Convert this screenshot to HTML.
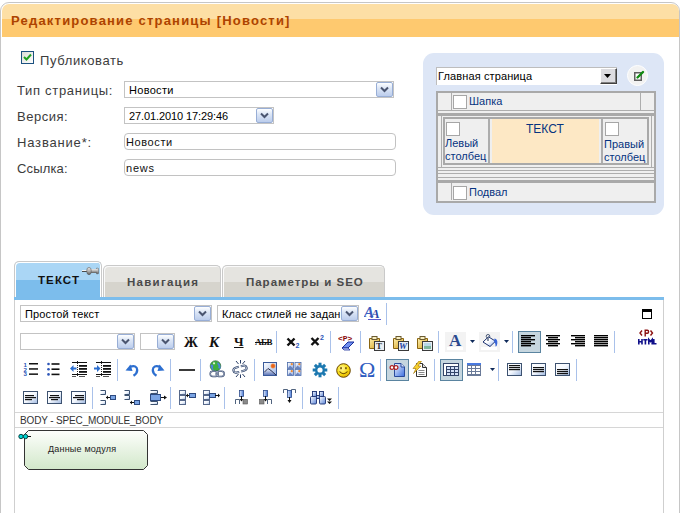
<!DOCTYPE html>
<html><head><meta charset="utf-8">
<style>
*{box-sizing:border-box;margin:0;padding:0}
html,body{width:680px;height:513px;overflow:hidden;background:#fff}
body{position:relative;font-family:"Liberation Sans",sans-serif;color:#000}
.a{position:absolute}
svg{display:block}
.t{position:absolute;white-space:nowrap;line-height:1}
#win{left:0;top:2px;width:680px;height:530px;border:1px solid #c6c6c6;border-radius:9px 9px 0 0;background:#fff}
#hdr{left:2px;top:4px;width:677px;height:33px;border-radius:7px 7px 0 0;background:linear-gradient(#fddfa5 0,#fddfa5 15px,#fec96f 15px,#fec96f 33px)}
.lbl{font-size:13px;color:#3c3c3c;letter-spacing:.7px}
.sel{position:absolute;border:1px solid #c3c3c3;background:#fff;height:17px}
.sel .v{position:absolute;left:4px;top:3px;font-size:11px;line-height:1;white-space:nowrap}
.xb{position:absolute;right:0;top:0;width:17px;height:15px;border:1px solid #98aed6;border-radius:2px;background:linear-gradient(#fdfeff,#dce6f6 40%,#bccdec)}
.xb svg{position:absolute;left:3px;top:3px}
.inp{position:absolute;border:1px solid #c2c2c2;border-radius:4px;background:#fff;height:17px}
.inp .v{position:absolute;left:1px;top:3px;font-size:11px;line-height:1;white-space:nowrap;letter-spacing:.6px;color:#111}
#panel{left:423px;top:53px;width:241px;height:162px;border-radius:11px;background:#dde6f6}
.bl{color:#06337f;font-size:11px}
.cb{position:absolute;width:14px;height:14px;border:1px solid #a6a6a6;background:#fff}
.sep{position:absolute;width:1px;background:#a9c1ea}
.tab{position:absolute;border:1px solid #c9c9c9;border-bottom:none;border-radius:5px 5px 0 0}
</style></head><body>
<div id="win" class="a"></div>
<div id="hdr" class="a"></div>
<div class="t" style="left:11px;top:14px;font-size:13px;font-weight:bold;color:#ad4300;letter-spacing:1.2px">Редактирование страницы [Новости]</div>

<!-- publish checkbox -->
<div class="a" style="left:21px;top:51px;width:13px;height:13px;border:1px solid #1c5180;background:linear-gradient(135deg,#dcdcd6,#fff)"></div>
<svg class="a" style="left:23px;top:53px" width="9" height="9" viewBox="0 0 9 9"><path d="M1 4 L3.5 6.5 L8 1.5" stroke="#21a121" stroke-width="2" fill="none"/></svg>
<div class="t lbl" style="left:40px;top:54px;letter-spacing:.62px">Публиковать</div>

<div class="t lbl" style="left:17px;top:84px">Тип страницы:</div>
<div class="t lbl" style="left:17px;top:110px;letter-spacing:.5px">Версия:</div>
<div class="t lbl" style="left:17px;top:136px;letter-spacing:.82px">Название*:</div>
<div class="t lbl" style="left:17px;top:162px;letter-spacing:.15px">Ссылка:</div>

<div class="sel" style="left:124px;top:81px;width:270px"><div class="v" style="letter-spacing:.3px">Новости</div><div class="xb"><svg width="9" height="7" viewBox="0 0 9 7"><path d="M1 1.5 L4.5 5 L8 1.5" stroke="#4a5570" stroke-width="2" fill="none"/></svg></div></div>
<div class="sel" style="left:124px;top:107px;width:150px"><div class="v" style="letter-spacing:-.1px">27.01.2010 17:29:46</div><div class="xb"><svg width="9" height="7" viewBox="0 0 9 7"><path d="M1 1.5 L4.5 5 L8 1.5" stroke="#4a5570" stroke-width="2" fill="none"/></svg></div></div>
<div class="inp" style="left:124px;top:133px;width:272px"><div class="v">Новости</div></div>
<div class="inp" style="left:124px;top:159px;width:272px"><div class="v" style="letter-spacing:.8px">news</div></div>

<!-- right panel -->
<div id="panel" class="a"></div>
<div class="a" style="left:436px;top:67px;width:181px;height:18px;border-top:1px solid #bdbdbd;border-left:1px solid #bdbdbd;background:#fff"></div>
<div class="t" style="left:438px;top:71px;font-size:11px;letter-spacing:.12px">Главная страница</div>
<div class="a" style="left:600px;top:68px;width:17px;height:16px;background:#dcdce0;border:1px solid;border-color:#fff #404040 #404040 #fff;box-shadow:inset -1px -1px 0 #808080"></div>
<svg class="a" style="left:604px;top:74px" width="7" height="4"><path d="M0 0H7L3.5 4Z" fill="#000"/></svg>
<div class="a" style="left:627px;top:65px;width:21px;height:21px;border-radius:50%;background:#f2f2f2;border:1px solid #fff"></div>
<svg class="a" style="left:633px;top:70px" width="12" height="12" viewBox="0 0 12 12"><rect x="1.75" y="2.75" width="6.5" height="7.5" fill="#fff" stroke="#606060" stroke-width="1.5"/><path d="M4.5 7.5 L10 2" stroke="#108a10" stroke-width="2.4" stroke-linecap="round"/></svg>

<div id="lt" class="a" style="left:436px;top:91px;width:220px;height:112px;background:#efefef;border:2px solid #a9a9a9"></div>
<div class="a" style="left:451px;top:93px;width:1px;height:17px;background:#adadad"></div>
<div class="a" style="left:640px;top:93px;width:1px;height:17px;background:#adadad"></div>
<div class="a" style="left:438px;top:110px;width:216px;height:1px;background:#adadad"></div>
<div class="a" style="left:438px;top:113px;width:216px;height:3px;background:#a9a9a9"></div>
<div class="cb" style="left:453px;top:95px"></div>
<div class="t bl" style="left:469px;top:96px">Шапка</div>
<div class="a" style="left:441px;top:116px;width:1px;height:52px;background:#adadad"></div>
<div class="a" style="left:651px;top:116px;width:1px;height:52px;background:#adadad"></div>
<div class="a" style="left:443px;top:117px;width:206px;height:48px;border:2px solid #a9a9a9"></div>
<div class="a" style="left:488px;top:119px;width:2px;height:44px;background:#adadad"></div>
<div class="a" style="left:492px;top:119px;width:107px;height:44px;background:#fde8c5"></div>
<div class="a" style="left:601px;top:119px;width:2px;height:44px;background:#adadad"></div>
<div class="cb" style="left:446px;top:122px"></div>
<div class="cb" style="left:605px;top:122px"></div>
<div class="t bl" style="left:526px;top:123px;font-size:12px">ТЕКСТ</div>
<div class="t bl" style="left:445px;top:137px;line-height:13px">Левый<br>столбец</div>
<div class="t bl" style="left:604px;top:138px;line-height:13px">Правый<br>столбец</div>
<div class="a" style="left:438px;top:167px;width:216px;height:1px;background:#adadad"></div>
<div class="a" style="left:438px;top:170px;width:216px;height:1px;background:#adadad"></div>
<div class="a" style="left:438px;top:173px;width:216px;height:1px;background:#adadad"></div>
<div class="a" style="left:438px;top:177px;width:216px;height:1px;background:#adadad"></div>
<div class="a" style="left:438px;top:180px;width:216px;height:3px;background:#a9a9a9"></div>
<div class="a" style="left:451px;top:183px;width:1px;height:17px;background:#adadad"></div>
<div class="cb" style="left:453px;top:186px"></div>
<div class="t bl" style="left:469px;top:187px">Подвал</div>

<!-- tabs -->
<div class="tab" style="left:14px;top:261px;width:88px;height:36px;background:linear-gradient(#aad6f5 0,#aad6f5 18px,#7cbdec 18px);box-shadow:inset 1px 1px 0 #fff,inset -1px 0 0 #fff"></div>
<div class="t" style="left:38px;top:275px;font-size:11.5px;font-weight:bold;letter-spacing:1.1px;color:#111">ТЕКСТ</div>
<svg class="a" style="left:82px;top:267px" width="17" height="8" viewBox="0 0 17 8"><defs><linearGradient id="pg" x1="0" y1="0" x2="0" y2="1"><stop offset="0" stop-color="#e8e8e8"/><stop offset=".5" stop-color="#b4b4b4"/><stop offset="1" stop-color="#5a5a5a"/></linearGradient></defs><rect x="0" y="3" width="5" height="1" fill="#f4f4f4"/><rect x="0" y="4" width="5" height="1" fill="#4a4a4a"/><path d="M14.5 1.2H15.8Q16.6 1.2 16.6 2V6Q16.6 6.8 15.8 6.8H14.5Z" fill="url(#pg)" stroke="#555" stroke-width=".5"/><rect x="8" y="2" width="7" height="4" fill="url(#pg)"/><ellipse cx="7" cy="4" rx="2.3" ry="3.7" fill="url(#pg)" stroke="#4a4a4a" stroke-width=".5"/></svg>
<div class="tab" style="left:103px;top:265px;width:118px;height:32px;background:linear-gradient(#e5e4e0 0,#e5e4e0 16px,#d6d4cd 16px);box-shadow:inset 1px 1px 0 #fafafa"></div>
<div class="t" style="left:127px;top:277px;font-size:11.5px;font-weight:bold;letter-spacing:1.26px;color:#4a4a4a">Навигация</div>
<div class="tab" style="left:222px;top:265px;width:163px;height:32px;background:linear-gradient(#e5e4e0 0,#e5e4e0 16px,#d6d4cd 16px);box-shadow:inset 1px 1px 0 #fafafa"></div>
<div class="t" style="left:246px;top:277px;font-size:11.5px;font-weight:bold;letter-spacing:.98px;color:#4a4a4a">Параметры и SEO</div>
<div class="a" style="left:14px;top:297px;width:650px;height:3px;background:#7cbdec"></div>
<div class="a" style="left:14px;top:300px;width:650px;height:220px;border:1px solid #cfcfcf;border-top:none"></div>
<div class="a" style="left:15px;top:412px;width:648px;height:1px;background:#d6d6d6"></div>
<div class="a" style="left:15px;top:427px;width:648px;height:1px;background:#d6d6d6"></div>
<div class="t" style="left:20px;top:416px;font-size:10px;letter-spacing:-.15px;color:#333">BODY - SPEC_MODULE_BODY</div>
<svg class="a" style="left:23px;top:429px" width="127" height="43" viewBox="0 0 127 43"><defs><linearGradient id="mg" x1="0" y1="0" x2="0" y2="1"><stop offset="0" stop-color="#fdfefc"/><stop offset="1" stop-color="#d2e8ca"/></linearGradient></defs><path d="M5.5 1.5H120.5L124.5 5.5V36.5L120.5 40.5H5.5L1.5 36.5V5.5Z" fill="url(#mg)" stroke="#333" stroke-width="1"/></svg>
<div class="t" style="left:48px;top:445px;font-size:9px;letter-spacing:.2px;color:#222">Данные модуля</div>
<div class="sel" style="left:20px;top:305px;width:192px"><div class="v" style="letter-spacing:0.15px">Простой текст</div><div class="xb"><svg width="9" height="7" viewBox="0 0 9 7"><path d="M1 1.5 L4.5 5 L8 1.5" stroke="#4a5570" stroke-width="2" fill="none"/></svg></div></div>
<div class="sel" style="left:217px;top:305px;width:142px"><div class="v" style="letter-spacing:0.1px">Класс стилей не задан</div><div class="xb"><svg width="9" height="7" viewBox="0 0 9 7"><path d="M1 1.5 L4.5 5 L8 1.5" stroke="#4a5570" stroke-width="2" fill="none"/></svg></div></div>
<svg class="a" style="left:364px;top:304px" width="19" height="17" viewBox="0 0 19 17"><text x="0" y="13" font-family="Liberation Serif" font-style="italic" font-weight="bold" font-size="15" fill="#3b5cc0">A</text><text x="7" y="14" font-family="Liberation Serif" font-style="italic" font-weight="bold" font-size="13" fill="#2a48a8">A</text><rect x="4" y="15" width="13" height="1" fill="#5a5ad0"/></svg>
<div class="sep" style="left:386px;top:303px;height:22px"></div>
<svg class="a" style="left:642px;top:309px" width="10" height="10" viewBox="0 0 10 10"><rect x="0.5" y="0.5" width="9" height="9" fill="none" stroke="#000"/><rect x="0" y="0" width="10" height="3" fill="#000"/></svg>
<div class="sel" style="left:20px;top:333px;width:115px"><div class="xb"><svg width="9" height="7" viewBox="0 0 9 7"><path d="M1 1.5 L4.5 5 L8 1.5" stroke="#4a5570" stroke-width="2" fill="none"/></svg></div></div>
<div class="sel" style="left:140px;top:333px;width:35px"><div class="xb"><svg width="9" height="7" viewBox="0 0 9 7"><path d="M1 1.5 L4.5 5 L8 1.5" stroke="#4a5570" stroke-width="2" fill="none"/></svg></div></div>
<div class="t" style="left:184px;top:336px;font-family:'Liberation Serif',serif;font-size:14px;font-style:normal;font-weight:bold;color:#111;">Ж</div>
<div class="t" style="left:209px;top:335px;font-family:'Liberation Serif',serif;font-size:15px;font-style:italic;font-weight:bold;color:#111;">К</div>
<div class="t" style="left:234px;top:335px;font-family:'Liberation Serif',serif;font-size:13px;font-style:normal;font-weight:bold;color:#111;text-decoration:underline;text-underline-offset:1px">Ч</div>
<div class="t" style="left:255px;top:338px;font-family:'Liberation Serif',serif;font-size:9px;font-weight:bold;letter-spacing:-.5px;color:#111">АБВ</div>
<div class="a" style="left:255px;top:342px;width:16px;height:1px;background:#111"></div>
<div class="sep" style="left:276px;top:331px;height:22px"></div>
<svg class="a" style="left:286px;top:336px" width="16" height="13" viewBox="0 0 16 13"><path d="M1.5 2.5L8.5 9.5M8.5 2.5L1.5 9.5" stroke="#111" stroke-width="2.4"/><text x="9.5" y="11.5" font-family="Liberation Sans" font-weight="bold" font-size="7" fill="#2d56b8">2</text></svg>
<svg class="a" style="left:310px;top:333px" width="16" height="14" viewBox="0 0 16 14"><path d="M1.5 5L8.5 12M8.5 5L1.5 12" stroke="#111" stroke-width="2.4"/><text x="10" y="7" font-family="Liberation Sans" font-weight="bold" font-size="7" fill="#2d56b8">2</text></svg>
<div class="sep" style="left:330px;top:331px;height:22px"></div>
<svg class="a" style="left:338px;top:334px" width="18" height="17" viewBox="0 0 18 17"><text x="0" y="7" font-family="Liberation Mono" font-weight="bold" font-size="8" fill="#8b0a0a">&lt;P&gt;</text><path d="M4 14 L10 8 L16 8 L10 14 Z" fill="#6f8ff0" stroke="#1a2f9a" stroke-width="1"/><path d="M4 14 L6 16 L12 16 L10 14Z" fill="#c8d4ff" stroke="#1a2f9a" stroke-width=".8"/></svg>
<div class="sep" style="left:360px;top:331px;height:22px"></div>
<svg class="a" style="left:368px;top:335px" width="17" height="16" viewBox="0 0 17 16"><defs><linearGradient id="cl" x1="0" y1="0" x2="1" y2="1"><stop offset="0" stop-color="#fff2b0"/><stop offset="1" stop-color="#d49e1c"/></linearGradient></defs><path d="M1.5 3.5H11.5V13.5H1.5Z" fill="url(#cl)" stroke="#8a6510"/><rect x="4" y="1.5" width="5" height="3" fill="#f8eec0" stroke="#6a5a30" stroke-width="1"/><rect x="6.5" y="6.5" width="10" height="9" fill="#e9eef3" stroke="#3a3a3a"/><text x="8" y="14" font-family="Liberation Serif" font-weight="bold" font-size="9" fill="#333">T</text></svg>
<svg class="a" style="left:392px;top:335px" width="17" height="16" viewBox="0 0 17 16"><defs><linearGradient id="cl" x1="0" y1="0" x2="1" y2="1"><stop offset="0" stop-color="#fff2b0"/><stop offset="1" stop-color="#d49e1c"/></linearGradient></defs><path d="M1.5 3.5H11.5V13.5H1.5Z" fill="url(#cl)" stroke="#8a6510"/><rect x="4" y="1.5" width="5" height="3" fill="#f8eec0" stroke="#6a5a30" stroke-width="1"/><rect x="6.5" y="6.5" width="10" height="9" fill="#e9eef3" stroke="#3a3a3a"/><text x="7" y="14" font-family="Liberation Serif" font-style="italic" font-weight="bold" font-size="9" fill="#2040a0">W</text></svg>
<svg class="a" style="left:416px;top:335px" width="17" height="16" viewBox="0 0 17 16"><defs><linearGradient id="cl" x1="0" y1="0" x2="1" y2="1"><stop offset="0" stop-color="#fff2b0"/><stop offset="1" stop-color="#d49e1c"/></linearGradient></defs><path d="M1.5 3.5H11.5V13.5H1.5Z" fill="url(#cl)" stroke="#8a6510"/><rect x="4" y="1.5" width="5" height="3" fill="#f8eec0" stroke="#6a5a30" stroke-width="1"/><rect x="6.5" y="6.5" width="10" height="9" fill="#e9eef3" stroke="#3a3a3a"/><rect x="8" y="8" width="7" height="6" fill="#7fb8a0"/><rect x="8" y="8" width="7" height="3" fill="#b8d8e8"/></svg>
<div class="sep" style="left:438px;top:331px;height:22px"></div>
<div class="a" style="left:445px;top:332px;width:21px;height:20px;background:#f3f3f3;"></div>
<div class="a" style="left:447px;top:347px;width:16px;height:3px;background:#fff"></div>
<div class="t" style="left:449px;top:332px;font-family:'Liberation Serif',serif;font-size:17px;font-style:normal;font-weight:bold;color:#2b4a90;">A</div>
<svg class="a" style="left:470px;top:340px" width="5" height="3" viewBox="0 0 5 3"><path d="M0 0H5L2.5 3Z" fill="#0f2a5a"/></svg>
<div class="a" style="left:479px;top:332px;width:21px;height:20px;background:#f3f3f3;"></div>
<div class="a" style="left:481px;top:347px;width:16px;height:3px;background:#fff"></div>
<svg class="a" style="left:482px;top:334px" width="16" height="14" viewBox="0 0 16 14"><defs><linearGradient id="bk" x1="0" y1="0" x2="1" y2="1"><stop offset=".45" stop-color="#fff"/><stop offset="1" stop-color="#8fb0ee"/></linearGradient></defs><circle cx="6" cy="2.3" r="1.8" fill="none" stroke="#4a5a78" stroke-width="1"/><path d="M1 8 L6.5 2.8 L13.5 7.2 L8 12.5 Z" fill="url(#bk)" stroke="#1a3070" stroke-width="1"/><path d="M6 3V7" stroke="#4a5a78" stroke-width="1.3"/><path d="M12.5 4.5 Q15.8 5 15.3 9.5 Q15 12.5 13.5 12.5 Q13.8 9.5 12 7.5Z" fill="#3a66d8"/></svg>
<svg class="a" style="left:504px;top:340px" width="5" height="3" viewBox="0 0 5 3"><path d="M0 0H5L2.5 3Z" fill="#0f2a5a"/></svg>
<div class="sep" style="left:512px;top:331px;height:22px"></div>
<div class="a" style="left:518px;top:331px;width:23px;height:22px;background:#c6d6df;border:1px solid #5a84a0;"></div>
<svg class="a" style="left:521px;top:335px" width="14" height="12" viewBox="0 0 14 12"><rect x="0" y="0" width="14" height="1.4" fill="#000"/><rect x="0" y="2" width="10" height="1.4" fill="#000"/><rect x="0" y="4" width="14" height="1.4" fill="#000"/><rect x="0" y="6" width="10" height="1.4" fill="#000"/><rect x="0" y="8" width="14" height="1.4" fill="#000"/><rect x="0" y="10" width="10" height="1.4" fill="#000"/></svg>
<svg class="a" style="left:546px;top:335px" width="14" height="12" viewBox="0 0 14 12"><rect x="0" y="0" width="14" height="1.4" fill="#000"/><rect x="2" y="2" width="10" height="1.4" fill="#000"/><rect x="0" y="4" width="14" height="1.4" fill="#000"/><rect x="2" y="6" width="10" height="1.4" fill="#000"/><rect x="0" y="8" width="14" height="1.4" fill="#000"/><rect x="2" y="10" width="10" height="1.4" fill="#000"/></svg>
<svg class="a" style="left:571px;top:335px" width="14" height="12" viewBox="0 0 14 12"><rect x="0" y="0" width="14" height="1.4" fill="#000"/><rect x="4" y="2" width="10" height="1.4" fill="#000"/><rect x="0" y="4" width="14" height="1.4" fill="#000"/><rect x="4" y="6" width="10" height="1.4" fill="#000"/><rect x="0" y="8" width="14" height="1.4" fill="#000"/><rect x="4" y="10" width="10" height="1.4" fill="#000"/></svg>
<svg class="a" style="left:594px;top:335px" width="14" height="12" viewBox="0 0 14 12"><rect x="0" y="0" width="14" height="1.4" fill="#000"/><rect x="0" y="2" width="14" height="1.4" fill="#000"/><rect x="0" y="4" width="14" height="1.4" fill="#000"/><rect x="0" y="6" width="14" height="1.4" fill="#000"/><rect x="0" y="8" width="14" height="1.4" fill="#000"/><rect x="0" y="10" width="14" height="1.4" fill="#000"/></svg>
<div class="sep" style="left:614px;top:331px;height:22px"></div>
<svg class="a" style="left:636px;top:328px" width="21" height="18" viewBox="0 0 21 18"><g fill="none" stroke="#8b1010" stroke-width="1.4"><path d="M6 2.5 L4 5 L6 7.5"/><path d="M9.2 8.5 V2.2 H11.3 Q12.6 2.2 12.6 3.8 Q12.6 5.3 11.3 5.3 H9.2"/><path d="M14.5 2.5 L16.5 5 L14.5 7.5"/></g><g fill="none" stroke="#10108a" stroke-width="1.6"><path d="M2.8 11 V16.5 M6 11 V16.5 M2.8 13.7 H6"/><path d="M7.3 11.8 H11.5 M9.4 11 V16.5"/><path d="M12.8 16.5 V11.5 L14.5 13.5 L16.2 11.5 V16.5"/><path d="M17.8 11 V15.7 H20.5"/></g></svg>
<svg class="a" style="left:23px;top:362px" width="15" height="14" viewBox="0 0 15 14"><text x="0.5" y="5.0" font-family="Liberation Sans" font-weight="bold" font-size="6.2" fill="#2d56b8">1</text><rect x="6" y="1.0" width="9" height="1.5" fill="#111"/><text x="0.5" y="9.6" font-family="Liberation Sans" font-weight="bold" font-size="6.2" fill="#2d56b8">2</text><rect x="6" y="6.2" width="9" height="1.5" fill="#111"/><text x="0.5" y="14.2" font-family="Liberation Sans" font-weight="bold" font-size="6.2" fill="#2d56b8">3</text><rect x="6" y="11.4" width="9" height="1.5" fill="#111"/></svg>
<svg class="a" style="left:47px;top:362px" width="14" height="14" viewBox="0 0 14 14"><circle cx="1.5" cy="2.0" r="1.3" fill="#2d56b8"/><rect x="4.5" y="1.2" width="8" height="1.6" fill="#111"/><circle cx="1.5" cy="7.2" r="1.3" fill="#2d56b8"/><rect x="4.5" y="6.4" width="8" height="1.6" fill="#111"/><circle cx="1.5" cy="12.4" r="1.3" fill="#2d56b8"/><rect x="4.5" y="11.6" width="8" height="1.6" fill="#111"/></svg>
<svg class="a" style="left:70px;top:361px" width="17" height="16" viewBox="0 0 17 16"><rect x="2" y="1" width="15" height="1" fill="#111"/><rect x="2" y="13" width="15" height="1" fill="#111"/><rect x="9" y="4" width="8" height="1.8" fill="#111"/><rect x="9" y="7" width="8" height="1.8" fill="#111"/><rect x="9" y="10" width="8" height="1.8" fill="#111"/><path d="M7.5 0V16" stroke="#222" stroke-width="1" stroke-dasharray="1 1"/><rect x="2" y="15" width="4" height="1" fill="#555"/><rect x="9" y="15" width="6" height="1" fill="#555"/><path d="M0 7.5 L3.5 4 V6.5 H6.5 V8.5 H3.5 V11Z" fill="#2d6fd0"/></svg>
<svg class="a" style="left:94px;top:361px" width="17" height="16" viewBox="0 0 17 16"><rect x="2" y="1" width="15" height="1" fill="#111"/><rect x="2" y="13" width="15" height="1" fill="#111"/><rect x="9" y="4" width="8" height="1.8" fill="#111"/><rect x="9" y="7" width="8" height="1.8" fill="#111"/><rect x="9" y="10" width="8" height="1.8" fill="#111"/><path d="M7.5 0V16" stroke="#222" stroke-width="1" stroke-dasharray="1 1"/><rect x="2" y="15" width="4" height="1" fill="#555"/><rect x="9" y="15" width="6" height="1" fill="#555"/><path d="M6.5 7.5 L3 4 V6.5 H0 V8.5 H3 V11Z" fill="#2d6fd0"/></svg>
<div class="sep" style="left:117px;top:359px;height:22px"></div>
<svg class="a" style="left:125px;top:363px" width="14" height="14" viewBox="0 0 14 14"><path d="M4.5 4 Q12 1.5 12.2 7 Q12.2 10.5 8.5 12.8" stroke="#2d6fd0" stroke-width="2.3" fill="none"/><path d="M0.5 7.5 L5.5 1.5 L7.5 8Z" fill="#2d6fd0"/></svg>
<svg class="a" style="left:151px;top:363px" width="14" height="14" viewBox="0 0 14 14"><path d="M9.5 4 Q2 1.5 1.8 7 Q1.8 10.5 5.5 12.8" stroke="#2d6fd0" stroke-width="2.3" fill="none"/><path d="M13.5 7.5 L8.5 1.5 L6.5 8Z" fill="#2d6fd0"/></svg>
<div class="sep" style="left:170px;top:359px;height:22px"></div>
<div class="a" style="left:179px;top:369px;width:16px;height:2px;background:#3a3a3a"></div>
<div class="sep" style="left:200px;top:359px;height:22px"></div>
<svg class="a" style="left:209px;top:360px" width="17" height="18" viewBox="0 0 17 18"><circle cx="6.5" cy="6" r="5.3" fill="#3fae3f" stroke="#2a5a3a" stroke-width=".6"/><path d="M1.6 4.5 Q1.8 9 5 11.2 Q3.2 8 4.2 5Z" fill="#4a84e0"/><path d="M8.8 2.2 Q12.2 4.5 11.4 9 L9.2 8 Q10.2 5.8 8.2 3.8Z" fill="#4a84e0"/><circle cx="5" cy="3.3" r="1.1" fill="#e0f4d8"/><g fill="none"><rect x="1.2" y="11.2" width="8" height="5.2" rx="2.6" stroke="#2b3f66" stroke-width="1.5"/><rect x="7.2" y="11.2" width="8" height="5.2" rx="2.6" stroke="#2b3f66" stroke-width="1.5"/><rect x="1.2" y="11.2" width="8" height="5.2" rx="2.6" stroke="#e8eef8" stroke-width=".5"/><rect x="7.2" y="11.2" width="8" height="5.2" rx="2.6" stroke="#e8eef8" stroke-width=".5"/></g></svg>
<svg class="a" style="left:232px;top:360px" width="17" height="18" viewBox="0 0 17 18"><path d="M4 1L6.5 4M8.5 0V3.5M13 1L10.5 4M4 17L6.5 14M8.5 18V14.5M13 17L10.5 14" stroke="#2b3f66" stroke-width="1"/><g fill="none" transform="rotate(-15 8.5 9)"><path d="M7.5 6.5H4Q1.3 6.5 1.3 9Q1.3 11.5 4 11.5H6.5" stroke="#2b3f66" stroke-width="2.1"/><path d="M9.5 6.5H12Q14.7 6.5 14.7 9Q14.7 11.5 12 11.5H8.5" stroke="#2b3f66" stroke-width="2.1"/><path d="M7.5 6.5H4Q1.3 6.5 1.3 9Q1.3 11.5 4 11.5H6.5M9.5 6.5H12Q14.7 6.5 14.7 9Q14.7 11.5 12 11.5H8.5" stroke="#e8eef8" stroke-width=".7"/></g></svg>
<div class="sep" style="left:254px;top:359px;height:22px"></div>
<svg width="0" height="0" style="position:absolute"><defs><linearGradient id="ig" x1="0" y1="0" x2="1" y2="1"><stop offset="0" stop-color="#ffffff"/><stop offset="1" stop-color="#9cb4e4"/></linearGradient><linearGradient id="im" x1="0" y1="0" x2="0" y2="1"><stop offset="0" stop-color="#f4f6fc"/><stop offset="1" stop-color="#6078b8"/></linearGradient></defs></svg>
<svg class="a" style="left:263px;top:362px" width="14" height="14" viewBox="0 0 14 14"><rect x=".5" y=".5" width="13" height="13" fill="url(#ig)" stroke="#3a5a9a"/><path d="M1 11 L5 6.5 L8.5 9.5 L13 13 H1Z" fill="url(#im)"/><path d="M1 10.5 L5 6.5 L8 8.5 L13 13" fill="none" stroke="#2a3050" stroke-width="1"/><circle cx="10" cy="4" r="2.2" fill="#e8641a" stroke="#f0a060" stroke-width=".6"/></svg>
<svg class="a" style="left:287px;top:362px" width="15" height="14" viewBox="0 0 15 14"><rect x="0.5" y="0.5" width="6" height="6" fill="url(#ig)" stroke="#4a6aa8" stroke-width=".8"/><path d="M1 6 L3 3.5 L6.5 6.5Z" fill="#6a84c0"/><circle cx="4.8" cy="2.2" r="1.1" fill="#f08a30"/><rect x="8.0" y="0.5" width="6" height="6" fill="url(#ig)" stroke="#4a6aa8" stroke-width=".8"/><path d="M8.5 6 L10.5 3.5 L14.0 6.5Z" fill="#6a84c0"/><circle cx="12.3" cy="2.2" r="1.1" fill="#f08a30"/><rect x="0.5" y="7.5" width="6" height="6" fill="url(#ig)" stroke="#4a6aa8" stroke-width=".8"/><path d="M1 13 L3 10.5 L6.5 13.5Z" fill="#6a84c0"/><circle cx="4.8" cy="9.2" r="1.1" fill="#f08a30"/><rect x="8.0" y="7.5" width="6" height="6" fill="url(#ig)" stroke="#4a6aa8" stroke-width=".8"/><path d="M8.5 13 L10.5 10.5 L14.0 13.5Z" fill="#6a84c0"/><circle cx="12.3" cy="9.2" r="1.1" fill="#f08a30"/></svg>
<svg class="a" style="left:312px;top:362px" width="16" height="16" viewBox="0 0 16 16"><g transform="translate(8 8)" fill="#1c78b0"><circle r="4.9"/><rect x="-1.5" y="-7.3" width="3" height="3.6" transform="rotate(0)"/><rect x="-1.5" y="-7.3" width="3" height="3.6" transform="rotate(45)"/><rect x="-1.5" y="-7.3" width="3" height="3.6" transform="rotate(90)"/><rect x="-1.5" y="-7.3" width="3" height="3.6" transform="rotate(135)"/><rect x="-1.5" y="-7.3" width="3" height="3.6" transform="rotate(180)"/><rect x="-1.5" y="-7.3" width="3" height="3.6" transform="rotate(225)"/><rect x="-1.5" y="-7.3" width="3" height="3.6" transform="rotate(270)"/><rect x="-1.5" y="-7.3" width="3" height="3.6" transform="rotate(315)"/><circle r="2.6" fill="#fff"/></g></svg>
<svg class="a" style="left:336px;top:363px" width="15" height="15" viewBox="0 0 15 15"><defs><radialGradient id="sm" cx=".4" cy=".35" r=".7"><stop offset="0" stop-color="#fff6a0"/><stop offset=".6" stop-color="#f8dc10"/><stop offset="1" stop-color="#e0a800"/></radialGradient></defs><circle cx="7.5" cy="7.5" r="6.8" fill="url(#sm)" stroke="#6a4800" stroke-width="1"/><rect x="4.3" y="4.2" width="1.5" height="2" fill="#6a4800"/><rect x="9.2" y="4.2" width="1.5" height="2" fill="#6a4800"/><path d="M3.5 8.5 Q7.5 13 11.5 8.5" stroke="#6a4800" fill="none" stroke-width="1.1"/></svg>
<div class="t" style="left:359px;top:359px;font-family:'Liberation Serif',serif;font-size:22px;color:#2f5cc0">Ω</div>
<div class="sep" style="left:380px;top:359px;height:22px"></div>
<div class="a" style="left:386px;top:359px;width:23px;height:22px;background:#c6d6df;border:1px solid #5a84a0;"></div>
<svg class="a" style="left:389px;top:362px" width="17" height="15" viewBox="0 0 17 15"><defs><linearGradient id="md" x1="0" y1="0" x2="1" y2="1"><stop offset="0" stop-color="#f4f8ff"/><stop offset="1" stop-color="#3a6ee0"/></linearGradient></defs><path d="M5.5 1.5 H12 L15.5 5 V14.5 H5.5Z" fill="url(#md)" stroke="#2a4a9a"/><path d="M12 1.5 V5 H15.5" fill="#dde8ff" stroke="#2a4a9a"/><circle cx="3" cy="5.5" r="1.9" fill="#fff" stroke="#b02020" stroke-width="1.2"/><circle cx="7" cy="5.5" r="1.9" fill="#fff" stroke="#b02020" stroke-width="1.2"/></svg>
<svg class="a" style="left:412px;top:361px" width="16" height="16" viewBox="0 0 16 16"><path d="M4.5 2.5 H10.5 L14.5 6.5 V15.5 H4.5Z" fill="#fff" stroke="#333"/><path d="M10.5 2.5V6.5H14.5" fill="#ddd" stroke="#333"/><path d="M6.5 9.5H12.5M6.5 11.5H12.5M6.5 13.5H12.5" stroke="#8a8a8a"/><path d="M7 0 L1 7.5 H4 L1.5 12.5 L9 5 H6 L9.5 0Z" fill="#f6d030" stroke="#a07000" stroke-width=".6"/></svg>
<div class="sep" style="left:434px;top:359px;height:22px"></div>
<div class="a" style="left:440px;top:359px;width:23px;height:22px;background:#c6d6df;border:1px solid #5a84a0;"></div>
<svg class="a" style="left:443px;top:363px" width="16" height="13" viewBox="0 0 16 13"><rect width="16" height="13" fill="#34456a"/><rect x="1" y="1" width="14" height="2" fill="#fff"/><rect x="1" y="1" width="2" height="11" fill="#fff"/><rect x="4" y="4" width="3" height="2" fill="#d4e0f6"/><rect x="8" y="4" width="3" height="2" fill="#d4e0f6"/><rect x="12" y="4" width="3" height="2" fill="#d4e0f6"/><rect x="4" y="7" width="3" height="2" fill="#d4e0f6"/><rect x="8" y="7" width="3" height="2" fill="#d4e0f6"/><rect x="12" y="7" width="3" height="2" fill="#d4e0f6"/><rect x="4" y="10" width="3" height="2" fill="#d4e0f6"/><rect x="8" y="10" width="3" height="2" fill="#d4e0f6"/><rect x="12" y="10" width="3" height="2" fill="#d4e0f6"/></svg>
<svg class="a" style="left:467px;top:363px" width="14" height="13" viewBox="0 0 14 13"><rect width="14" height="13" fill="#6a7a98"/><rect x="0" y="0" width="14" height="2" fill="#4a7ae0"/><rect x="1" y="3" width="3" height="2" fill="#fff"/><rect x="5" y="3" width="3" height="2" fill="#fff"/><rect x="9" y="3" width="4" height="2" fill="#fff"/><rect x="1" y="6" width="3" height="2" fill="#fff"/><rect x="5" y="6" width="3" height="2" fill="#fff"/><rect x="9" y="6" width="4" height="2" fill="#fff"/><rect x="1" y="9" width="3" height="2" fill="#fff"/><rect x="5" y="9" width="3" height="2" fill="#fff"/><rect x="9" y="9" width="4" height="2" fill="#fff"/></svg>
<svg class="a" style="left:490px;top:368px" width="5" height="3" viewBox="0 0 5 3"><path d="M0 0H5L2.5 3Z" fill="#0f2a5a"/></svg>
<div class="sep" style="left:498px;top:359px;height:22px"></div>
<svg width="0" height="0" style="position:absolute"><defs><linearGradient id="gb" x1="0" y1="0" x2="1" y2="1"><stop offset="0" stop-color="#ffffff"/><stop offset=".5" stop-color="#f4f8fe"/><stop offset="1" stop-color="#9fb8e0"/></linearGradient></defs></svg>
<svg class="a" style="left:507px;top:363px" width="15" height="13" viewBox="0 0 15 13"><rect x=".5" y=".5" width="14" height="12" fill="url(#gb)" stroke="#3d5270"/><rect x="2" y="2" width="11" height="1.2" fill="#111"/><rect x="2" y="4" width="11" height="1.2" fill="#111"/><rect x="2" y="6" width="11" height="1.2" fill="#111"/></svg>
<svg class="a" style="left:531px;top:363px" width="15" height="13" viewBox="0 0 15 13"><rect x=".5" y=".5" width="14" height="12" fill="url(#gb)" stroke="#3d5270"/><rect x="2" y="4" width="11" height="1.2" fill="#111"/><rect x="2" y="6" width="11" height="1.2" fill="#111"/><rect x="2" y="8" width="11" height="1.2" fill="#111"/></svg>
<svg class="a" style="left:555px;top:363px" width="15" height="13" viewBox="0 0 15 13"><rect x=".5" y=".5" width="14" height="12" fill="url(#gb)" stroke="#3d5270"/><rect x="2" y="6" width="11" height="1.2" fill="#111"/><rect x="2" y="8" width="11" height="1.2" fill="#111"/><rect x="2" y="10" width="11" height="1.2" fill="#111"/></svg>
<div class="sep" style="left:576px;top:359px;height:22px"></div>
<svg class="a" style="left:23px;top:391px" width="15" height="13" viewBox="0 0 15 13"><rect x=".5" y=".5" width="14" height="12" fill="url(#gb)" stroke="#3d5270"/><rect x="2" y="4" width="9" height="1.2" fill="#111"/><rect x="2" y="6" width="11" height="1.2" fill="#111"/><rect x="2" y="8" width="7" height="1.2" fill="#111"/></svg>
<svg class="a" style="left:47px;top:391px" width="15" height="13" viewBox="0 0 15 13"><rect x=".5" y=".5" width="14" height="12" fill="url(#gb)" stroke="#3d5270"/><rect x="3.0" y="4" width="9" height="1.2" fill="#111"/><rect x="2.0" y="6" width="11" height="1.2" fill="#111"/><rect x="4.0" y="8" width="7" height="1.2" fill="#111"/></svg>
<svg class="a" style="left:71px;top:391px" width="15" height="13" viewBox="0 0 15 13"><rect x=".5" y=".5" width="14" height="12" fill="url(#gb)" stroke="#3d5270"/><rect x="4" y="4" width="9" height="1.2" fill="#111"/><rect x="2" y="6" width="11" height="1.2" fill="#111"/><rect x="6" y="8" width="7" height="1.2" fill="#111"/></svg>
<div class="sep" style="left:92px;top:387px;height:22px"></div>
<svg class="a" style="left:100px;top:390px" width="17" height="15" viewBox="0 0 17 15"><path d="M0.5 0.5H5.5V4.5H0.5" fill="url(#gb)" stroke="#3d5270"/><path d="M0.5 10.5H5.5V14.5H0.5" fill="url(#gb)" stroke="#3d5270"/><path d="M6 7.5H10" stroke="#111"/><path d="M6 7.5L8 5.5V9.5Z" fill="#111"/><rect x="10.5" y="5.5" width="5" height="4" fill="#7aa4e4" stroke="#2d4a80"/></svg>
<svg class="a" style="left:124px;top:390px" width="17" height="15" viewBox="0 0 17 15"><path d="M0.5 0.5H5.5V4.5H0.5" fill="url(#gb)" stroke="#3d5270"/><path d="M0.5 5.5H5.5V9.5H0.5" fill="url(#gb)" stroke="#3d5270"/><path d="M6 12.5H10" stroke="#111"/><path d="M6 12.5L8 10.5V14.5Z" fill="#111"/><rect x="10.5" y="10.5" width="5" height="4" fill="#7aa4e4" stroke="#2d4a80"/></svg>
<svg class="a" style="left:150px;top:390px" width="17" height="15" viewBox="0 0 17 15"><path d="M0.5 0.5H7.5V3.5H0.5" fill="url(#gb)" stroke="#3d5270"/><path d="M0.5 11.5H7.5V14.5H0.5" fill="url(#gb)" stroke="#3d5270"/><rect x="0.5" y="4.5" width="10" height="6" fill="#7aa4e4" stroke="#2d4a80"/><path d="M11 7.5H15" stroke="#111"/><path d="M17 7.5L14 5.5V9.5Z" fill="#111"/></svg>
<div class="sep" style="left:170px;top:387px;height:22px"></div>
<svg class="a" style="left:179px;top:390px" width="17" height="15" viewBox="0 0 17 15"><rect x=".5" y="0.5" width="6" height="4" fill="url(#gb)" stroke="#56688a"/><rect x=".5" y="5.5" width="6" height="4" fill="url(#gb)" stroke="#56688a"/><rect x=".5" y="10.5" width="6" height="4" fill="url(#gb)" stroke="#56688a"/><path d="M7 5.5H10" stroke="#111"/><path d="M7 5.5L9 3.5V7.5Z" fill="#111"/><rect x="10.5" y="3.5" width="6" height="4" fill="#7aa4e4" stroke="#2d4a80"/></svg>
<svg class="a" style="left:203px;top:390px" width="17" height="15" viewBox="0 0 17 15"><rect x=".5" y="0.5" width="6" height="4" fill="url(#gb)" stroke="#56688a"/><rect x=".5" y="5.5" width="6" height="4" fill="url(#gb)" stroke="#56688a"/><rect x=".5" y="10.5" width="6" height="4" fill="url(#gb)" stroke="#56688a"/><rect x="6.5" y="3.5" width="6" height="4" fill="#7aa4e4" stroke="#2d4a80"/><path d="M12 5.5H15" stroke="#111"/><path d="M17 5.5L15 3.5V7.5Z" fill="#111"/></svg>
<div class="sep" style="left:224px;top:387px;height:22px"></div>
<svg width="0" height="0" style="position:absolute"><defs><linearGradient id="vb" x1="0" y1="0" x2="1" y2="0"><stop offset="0" stop-color="#e4ecfa"/><stop offset="1" stop-color="#4a7ad8"/></linearGradient><linearGradient id="bn" x1="0" y1="0" x2="1" y2="1"><stop offset="0" stop-color="#ffffff"/><stop offset="1" stop-color="#5a84d8"/></linearGradient></defs></svg>
<svg class="a" style="left:235px;top:390px" width="14" height="15" viewBox="0 0 14 15"><rect x="4.5" y=".5" width="4" height="6" fill="url(#vb)" stroke="#2a4a8a" stroke-width=".8"/><path d="M6.5 6V10" stroke="#111"/><path d="M4.5 9H8.5L6.5 11.5Z" fill="#111"/><path d="M.5 14V9.5H4.5V14" fill="none" stroke="#3d5270" stroke-width=".9"/><rect x="8" y="9.5" width="4.5" height="4.5" fill="#8a8a8a" stroke="#555" stroke-width=".6"/></svg>
<svg class="a" style="left:259px;top:390px" width="14" height="15" viewBox="0 0 14 15"><rect x="4.5" y=".5" width="4" height="6" fill="url(#vb)" stroke="#2a4a8a" stroke-width=".8"/><path d="M6.5 6V10" stroke="#111"/><path d="M4.5 9H8.5L6.5 11.5Z" fill="#111"/><rect x=".5" y="9.5" width="4.5" height="4.5" fill="#8a8a8a" stroke="#555" stroke-width=".6"/><path d="M8.5 14V9.5H12.5V14" fill="none" stroke="#3d5270" stroke-width=".9"/></svg>
<svg class="a" style="left:283px;top:389px" width="14" height="15" viewBox="0 0 14 15"><path d="M.5 4V.5H4.5V4M8.5 4V.5H12.5V4" fill="none" stroke="#3d5270" stroke-width=".9"/><rect x="4.5" y="1.5" width="4" height="7" fill="url(#vb)" stroke="#2a4a8a" stroke-width=".8"/><path d="M6.5 8V12" stroke="#111"/><path d="M4.5 11H8.5L6.5 14Z" fill="#111"/></svg>
<div class="sep" style="left:302px;top:387px;height:22px"></div>
<svg class="a" style="left:310px;top:390px" width="24" height="15" viewBox="0 0 24 15"><g fill="url(#bn)" stroke="#1a3070" stroke-width=".9"><rect x="2.5" y="1.5" width="4" height="5"/><rect x="9.5" y="1.5" width="4" height="5"/><rect x="6.5" y="5.5" width="3" height="3"/><rect x=".5" y="6.5" width="6" height="7.5" rx="1"/><rect x="9.5" y="6.5" width="6" height="7.5" rx="1"/></g><path d="M17 8.5H22L19.5 11Z M17 11.5H22L19.5 14Z" fill="#111"/></svg>
<div class="sep" style="left:338px;top:387px;height:22px"></div>
<svg class="a" style="left:18px;top:433px" width="14" height="7" viewBox="0 0 14 7"><path d="M9 3.5H13" stroke="#111" stroke-width="1"/><circle cx="3" cy="3.5" r="2.2" fill="#00d6d6" stroke="#033" stroke-width=".9"/><circle cx="7.5" cy="3.5" r="2.2" fill="#00d6d6" stroke="#033" stroke-width=".9"/></svg>
</body></html>
